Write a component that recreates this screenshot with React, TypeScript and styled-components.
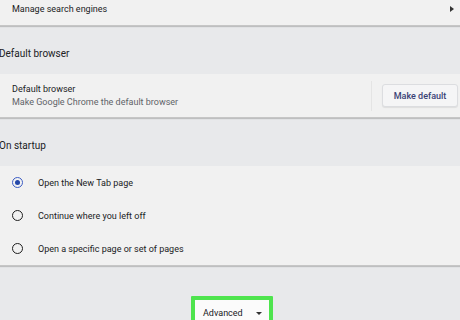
import React from 'react';
import styled, { createGlobalStyle } from 'styled-components';

const GlobalStyle = createGlobalStyle`
  html, body {
    margin: 0;
    padding: 0;
    background: #e8e9eb;
    font-family: Roboto, "Liberation Sans", sans-serif;
    overflow: hidden;
  }
`;

const Page = styled.div`
  width: 460px;
  height: 320px;
  overflow: hidden;
  display: flex;
  flex-direction: column;
  background: #e8e9eb;
`;

const Card = styled.div`
  background: #f1f1f1;
  box-shadow: 0 1px 1px rgba(0, 0, 0, 0.18);
  border-bottom: 1px solid #c6c6c6;
  display: flex;
  flex-direction: column;
`;

const LinkRow = styled.div`
  height: 33px;
  margin-top: -8px;
  display: flex;
  align-items: center;
  justify-content: space-between;
  padding: 0 6px 0 12px;
  font-size: 9px;
  color: #202124;
`;

const Arrow = styled.span`
  width: 0;
  height: 0;
  border-top: 3px solid transparent;
  border-bottom: 3px solid transparent;
  border-left: 4px solid #333;
`;

const Heading = styled.h2`
  margin: 0 0 0 -1px;
  padding: 22px 0 14px;
  line-height: 12px;
  font-size: 10px;
  font-weight: 400;
  color: #202124;
`;

const SettingRow = styled.div`
  display: flex;
  align-items: center;
  height: 43px;
  padding: 0 2px 0 12px;
`;

const SettingText = styled.div`
  flex: 1;
  display: flex;
  flex-direction: column;
  gap: 2px;
  line-height: 11px;
  font-size: 9px;
`;

const Title = styled.div`
  color: #202124;
`;

const Subtitle = styled.div`
  color: #5f6368;
`;

const Separator = styled.div`
  width: 1px;
  height: 30px;
  background: #e4e4e4;
  margin-right: 10px;
`;

const Button = styled.button`
  width: 76px;
  height: 23px;
  padding: 0;
  border: 1px solid #dcdde0;
  border-radius: 3px;
  background: #f5f5f6;
  box-shadow: 0 1px 1px rgba(0, 0, 0, 0.08);
  color: #3a4275;
  font-family: inherit;
  font-size: 9px;
  font-weight: 500;
`;

const RadioList = styled.div`
  display: flex;
  flex-direction: column;
`;

const RadioRow = styled.label`
  height: 33px;
  display: flex;
  align-items: center;
  gap: 15px;
  padding-left: 12px;
  font-size: 9px;
  color: #202124;
`;

const Radio = styled.span<{ $checked?: boolean }>`
  box-sizing: border-box;
  width: 11px;
  height: 11px;
  border-radius: 50%;
  border: 1.6px solid ${(p) => (p.$checked ? '#3b5cc4' : '#1f1f1f')};
  display: flex;
  align-items: center;
  justify-content: center;
  &::after {
    content: '';
    display: ${(p) => (p.$checked ? 'block' : 'none')};
    width: 5px;
    height: 5px;
    border-radius: 50%;
    background: #2447a8;
  }
`;

const Footer = styled.div`
  display: flex;
  justify-content: center;
  padding-top: 30px;
  padding-left: 4px;
`;

const AdvancedButton = styled.button`
  box-sizing: border-box;
  width: 82px;
  height: 36px;
  border: 4px solid #4ee44e;
  border-radius: 1px;
  background: #fbfbfb;
  display: flex;
  align-items: flex-start;
  justify-content: space-between;
  padding: 7px 7px 0 8px;
  font-family: inherit;
  font-size: 9px;
  line-height: 12px;
  color: #202124;
`;

const Caret = styled.span`
  margin-top: 5px;
  width: 0;
  height: 0;
  border-left: 3px solid transparent;
  border-right: 3px solid transparent;
  border-top: 3px solid #333;
`;

const options = [
  { label: 'Open the New Tab page', checked: true },
  { label: 'Continue where you left off', checked: false },
  { label: 'Open a specific page or set of pages', checked: false },
];

const App = (): React.ReactElement => (
  <Page>
    <GlobalStyle />
    <Card>
      <LinkRow>
        <span>Manage search engines</span>
        <Arrow />
      </LinkRow>
    </Card>
    <Heading>Default browser</Heading>
    <Card>
      <SettingRow>
        <SettingText>
          <Title>Default browser</Title>
          <Subtitle>Make Google Chrome the default browser</Subtitle>
        </SettingText>
        <Separator />
        <Button>Make default</Button>
      </SettingRow>
    </Card>
    <Heading>On startup</Heading>
    <Card>
      <RadioList>
        {options.map((o) => (
          <RadioRow key={o.label}>
            <Radio $checked={o.checked} />
            {o.label}
          </RadioRow>
        ))}
      </RadioList>
    </Card>
    <Footer>
      <AdvancedButton>
        Advanced
        <Caret />
      </AdvancedButton>
    </Footer>
  </Page>
);

export default App;
